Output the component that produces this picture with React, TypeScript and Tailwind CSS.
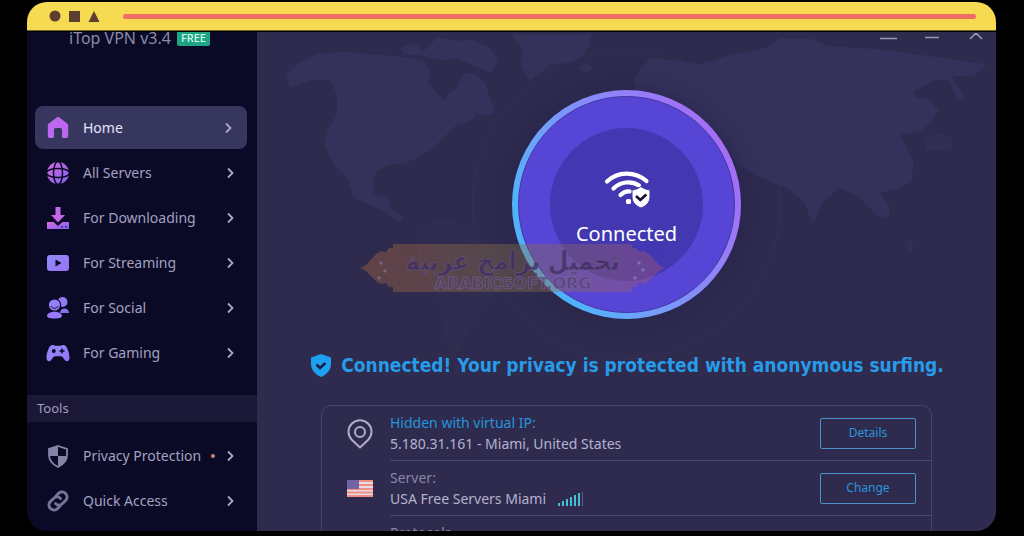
import type { ReactNode } from "react";

interface NavItem {
    label: string;
    icon: ReactNode;
    active?: boolean;
    dot?: boolean;
}

interface StatusRowProps {
    icon?: ReactNode;
    label: string;
    labelClass: string;
    value?: ReactNode;
    action?: string;
}

const SHIELD = "M12 1 22 4.5V11c0 6.200-4.200 10.200-10 13C6.200 21.200 2 17.200 2 11V4.500Z";

const serverItems: NavItem[] = [
    {
        label: "Home",
        active: true,
        icon: (
            <path
                fill="#bd66f0"
                d="M11 1.200a1.600 1.600 0 0 1 2 0l8.200 6.400c.6.500 1 1.200 1 2V20a2 2 0 0 1-2 2h-2.700a1.500 1.500 0 0 1-1.500-1.500V13.500a1.500 1.500 0 0 0-1.500-1.500h-5A1.500 1.500 0 0 0 8 13.500v7A1.500 1.500 0 0 1 6.500 22H3.800a2 2 0 0 1-2-2V9.600c0-.8.400-1.500 1-2Z"
            />
        ),
    },
    {
        label: "All Servers",
        icon: (
            <>
                <circle cx="12" cy="12" r="11" fill="url(#pinkViolet)" />
                <g fill="none" stroke="#0a0926" strokeWidth="1.500">
                    <ellipse cx="12" cy="12" rx="4.500" ry="11.500" />
                    <ellipse cx="12" cy="12" rx="11.500" ry="4.500" />
                </g>
            </>
        ),
    },
    {
        label: "For Downloading",
        icon: (
            <>
                <path fill="#c566ec" d="M9.500 1h5v8H19l-7 7.500L5 9h4.500Z" />
                <path fill="url(#pinkViolet)" d="M1 16h6.500l4.500 4 4.500-4H23v7H1Z" />
                <path fill="#3c2b9c" d="M15 20h2v1.500h-2zM19 20h2v1.500h-2z" />
            </>
        ),
    },
    {
        label: "For Streaming",
        icon: (
            <>
                <rect x="1" y="4" width="22" height="16" rx="3" fill="url(#violet)" />
                <path fill="#0a0926" d="m9.500 8.500 6 3.500-6 3.500Z" />
            </>
        ),
    },
    {
        label: "For Social",
        icon: (
            <>
                <circle cx="16.500" cy="6" r="5" fill="#9279ee" />
                <path fill="#8a70ea" d="M14 17c0-3 2-4.500 4.500-4.500S23 14 23 17Z" />
                <circle cx="8.500" cy="9" r="6.200" fill="url(#violet)" stroke="#0a0926" strokeWidth="1.200" />
                <path fill="none" stroke="#0a0926" d="M5 10c1 3 6 3 7 0" />
                <path fill="#9a78fb" d="M1 20c0-2.500 3.500-4.200 7.500-4.200S16 17.500 16 20c0 1.700-3 2.500-7.500 2.500S1 21.700 1 20Z" />
            </>
        ),
    },
    {
        label: "For Gaming",
        icon: (
            <>
                <path
                    fill="url(#violet)"
                    d="M6.500 4c1.500 0 2.200.8 3.500.8h4c1.300 0 2-.8 3.500-.8C21 4 23.500 12 23.500 17c0 2-1 3.200-2.600 3.200-2.500 0-3.700-5-6-5H9.100c-2.300 0-3.500 5-6 5C1.500 20.200.5 19 .5 17 .5 12 3 4 6.500 4Z"
                />
                <circle cx="7.800" cy="10" r="2" fill="#0a0926" />
                <path stroke="#0a0926" strokeWidth="1.500" d="M13.500 10h5M16 7.500v5" />
            </>
        ),
    },
];

const toolItems: NavItem[] = [
    {
        label: "Privacy Protection",
        dot: true,
        icon: (
            <>
                <path fill="none" stroke="#8783a8" strokeWidth="1.800" d="M12 2 21 5v6c0 5.500-3.500 9.300-9 12-5.500-2.700-9-6.500-9-12V5Z" />
                <path fill="#8783a8" d="M12 2v10H3V5ZM12 12h9c-.5 5-4 8.500-9 11Z" />
            </>
        ),
    },
    {
        label: "Quick Access",
        icon: (
            <g fill="none" stroke="#77739a" strokeWidth="3" strokeLinecap="round">
                <path d="m10 7 3-3a5 5 0 0 1 7 7l-3.500 3.500a5 5 0 0 1-7 0" />
                <path d="m14 17-3 3a5 5 0 0 1-7-7l3.500-3.500a5 5 0 0 1 7 0" />
            </g>
        ),
    },
];

const signalBars = [3, 5, 7, 9, 11, 13];

function Gradients() {
    return (
        <svg className="absolute size-0" aria-hidden="true">
            <defs>
                <linearGradient id="pinkViolet" x1="0" y1="0" x2="1" y2="1">
                    <stop offset="0%" stopColor="#dc6ae0" />
                    <stop offset="100%" stopColor="#7c62ee" />
                </linearGradient>
                <linearGradient id="violet" x1="0" y1="0" x2="1" y2="1">
                    <stop offset="0%" stopColor="#8e8cf8" />
                    <stop offset="100%" stopColor="#9873f4" />
                </linearGradient>
            </defs>
        </svg>
    );
}

function TitleBar() {
    return (
        <header className="flex h-[29px] shrink-0 items-center border-b border-[#6b6330] bg-[#f6db52] pr-5 pl-[22px]">
            <svg viewBox="0 0 50 12" className="h-3 w-[50px]" fill="#5b4030" aria-hidden="true">
                <circle cx="6" cy="6" r="5.500" />
                <rect x="20" y="1" width="11" height="11" />
                <path d="m45 1 5.500 11h-11Z" />
            </svg>
            <div className="ml-6 h-[5px] grow rounded-full bg-[#f06d62]" />
        </header>
    );
}

function NavLink({ item }: { item: NavItem }) {
    return (
        <li>
            <a
                href="#"
                className={
                    item.active
                        ? "flex h-[43px] items-center rounded-lg bg-[#37365f] pr-3 pl-[11px] text-[#e6e4fa]"
                        : "flex h-[43px] items-center pr-[10px] pl-[11px] text-[#a4a1c1]"
                }
            >
                <svg viewBox="0 0 24 24" className="size-6 shrink-0" aria-hidden="true">
                    {item.icon}
                </svg>
                <span className="ml-[13px] grow whitespace-nowrap">{item.label}</span>
                {item.dot && <span className="mr-2 size-1 rounded-full bg-[#d98078]" />}
                <svg viewBox="0 0 14 14" className="size-[14px] shrink-0" fill="none" stroke="#aaa7c6" strokeWidth="1.800" aria-hidden="true">
                    <path d="m5 2.500 4.500 4.500L5 11.500" />
                </svg>
            </a>
        </li>
    );
}

function Sidebar() {
    return (
        <aside className="flex w-[230px] shrink-0 flex-col bg-[#0a0926] text-sm">
            <div className="-mt-2 flex h-7 items-center gap-[6px] pl-[42px]">
                <span className="text-base text-[#8d8aa9]">iTop VPN v3.4</span>
                <span className="rounded-xs bg-[#20a584] px-1 text-[11px] leading-4 font-medium text-[#d5f7ee]">FREE</span>
            </div>
            <nav className="mt-[54px]" aria-label="Servers">
                <ul className="flex flex-col gap-[2px] pr-[10px] pl-2">
                    {serverItems.map((item) => (
                        <NavLink key={item.label} item={item} />
                    ))}
                </ul>
            </nav>
            <h2 className="mt-[21px] h-[27px] bg-[#1a1737] pl-[10px] text-[13px] leading-[27px] text-[#a19ebd]">Tools</h2>
            <nav className="mt-3" aria-label="Tools">
                <ul className="flex flex-col gap-[2px] pr-[10px] pl-2">
                    {toolItems.map((item) => (
                        <NavLink key={item.label} item={item} />
                    ))}
                </ul>
            </nav>
        </aside>
    );
}

function WorldMap() {
    return (
        <svg viewBox="0 33 2217 1000" className="absolute inset-x-0 top-0 w-full" fill="#34325b" aria-hidden="true">
            <path d="M85 165 120 130 180 100 260 92 340 100 420 105 500 120 522 150 510 185 540 215 565 240 575 215 600 200 620 160 650 155 680 180 700 230 715 275 690 285 660 275 640 300 600 310 570 340 530 380 480 410 440 430 400 430 360 450 345 480 350 520 390 530 400 560 440 590 430 605 380 570 290 530 270 470 230 430 200 370 215 320 240 280 240 220 220 180 170 175 100 200Z" />
            <path d="M430 80 470 65 500 90 540 50 600 60 640 55 700 80 725 120 700 155 640 130 600 110 560 120 500 105 440 100Z" />
            <path d="M760 40H1005L985 100 940 125 880 130 840 165 820 180 792 140 795 80Z" />
            <path d="M960 145 985 125 1010 140 995 155Z" />
            <path fill="#302d51" d="M475 640 520 600 570 590 640 630 700 680 760 720 730 820 670 880 620 960 590 1020 560 940 540 820 490 740Z" />
            <path d="M1130 170 1180 110 1270 120 1329 130 1409 105 1529 80 1569 50 1669 55 1709 75 1869 85 1979 100 2189 130 2149 165 2085 165 2128 240 2100 230 2075 175 2029 180 1969 210 1975 228 2015 235 2045 270 2024 300 1990 330 1929 340 1969 420 1965 480 1929 500 1869 515 1899 560 1895 595 1860 585 1809 530 1749 500 1699 540 1669 610 1639 540 1589 500 1509 470 1440 430 1380 330 1250 280 1140 270Z" />
            <path fill="#312f55" d="M2000 350 2050 335 2090 350 2080 385 2010 390ZM1940 670 1970 650 1965 700Z" />
        </svg>
    );
}

function WindowControls() {
    return (
        <svg viewBox="0 0 104 8" className="absolute top-px right-3 h-2 w-[104px]" fill="none" stroke="#9c99bb" strokeWidth="1.500" aria-hidden="true">
            <path d="M0 5.500h17M45 4.500h14M90 6l6-6 6 6" />
        </svg>
    );
}

function ConnectButton() {
    return (
        <div className="relative mt-[58px] size-[229px] shrink-0">
            <div className="absolute -inset-10 rounded-full border border-[#343157]" />
            <button
                type="button"
                className="relative flex size-full items-center justify-center rounded-full bg-linear-60 from-[#50b2fb] from-20% via-[#848cf8] via-55% to-[#a768f4] to-90% p-[6px] shadow-[0_0_24px_#28234d]"
            >
                <span className="flex size-full items-center justify-center rounded-full border border-[#4037a5] bg-[#5746d5]">
                    <span className="flex size-[153px] flex-col items-center rounded-full bg-[#4338b2] pt-[42px] text-xl text-white">
                        <svg viewBox="0 0 46 38" className="h-[38px] w-[46px] shrink-0" fill="none" aria-hidden="true">
                            <g stroke="#fff" strokeWidth="4.200" strokeLinecap="round">
                                <path d="M3 11.500C13.500 1 31 1 42.500 11" />
                                <path d="M9.500 18.500c7-7 18-8 25.500-3" />
                                <path d="M16.500 25c3-3 6.500-4 9.500-3.500" />
                            </g>
                            <rect x="22" y="29" width="5" height="5" rx="1.500" fill="#fff" />
                            <path d="M37 16.500c3 2.200 5.500 3 9 3.500v7c0 5.500-4 9-9 11-5-2-9-5.500-9-11v-7c3.500-.5 6-1.300 9-3.500Z" fill="#fff" stroke="#4338b2" />
                            <path d="m32 26 4.300 4 6-5.500" stroke="#15122f" strokeWidth="2.600" />
                        </svg>
                        <span className="mt-3 leading-7">Connected</span>
                    </span>
                </span>
            </button>
        </div>
    );
}

// Ornamental site banner that floats over the button
function Watermark() {
    return (
        <div className="pointer-events-none absolute top-[212px] left-[103px] h-[49px] w-[306px]">
            <svg viewBox="0 0 306 49" className="absolute inset-0 size-full opacity-40" aria-hidden="true">
                <defs>
                    <linearGradient id="banner">
                        <stop offset="0%" stopColor="#b06440" />
                        <stop offset="50%" stopColor="#87704a" />
                        <stop offset="100%" stopColor="#a65870" />
                    </linearGradient>
                </defs>
                <path
                    fill="url(#banner)"
                    d="M0 24c9-2 11-12 21-17l5 1 3-4h4V0h239v4h4l3 4 5-1c10 5 12 14 21 17-9 3-11 11-21 16l-5-1-3 4h-4v5H33v-5h-4l-3-4-5 1C11 35 9 27 0 24Z"
                />
                <path fill="#d4c4dd" d="m21 17 2 2-2 2-2-2Zm4 8 2 2-2 2-2-2Zm-6 7 2 2-2 2-2-2Zm260-15 2 2-2 2-2-2Zm4 7 2 2-2 2-2-2Zm-8 8 2 2-2 2-2-2Z" />
            </svg>
            <div className="relative flex h-full flex-col items-center">
                <span
                    lang="ar"
                    dir="rtl"
                    className="font-['DejaVu_Sans_Condensed','DejaVu_Sans',sans-serif] text-[26px] leading-[34px] font-bold whitespace-nowrap text-[#3e2e63]/80 [-webkit-text-stroke:1px_#77608a66]"
                >
                    تحميل برامج عربية
                </span>
                <span className="font-['DejaVu_Sans',sans-serif] text-base leading-3 font-bold text-[#4d3b6c]/60 [-webkit-text-stroke:1px_#8a73a077]">
                    ARABICSOFT.ORG
                </span>
            </div>
        </div>
    );
}

function SignalStrength() {
    return (
        <span className="ml-3 inline-flex h-[14px] items-end gap-[2px]">
            {signalBars.map((height) => (
                <span key={height} className="w-[2px] bg-[#43bfd8]" style={{ height }} />
            ))}
            <span className="h-[14px] w-px bg-[#605c87]" />
        </span>
    );
}

function StatusRow({ icon, label, labelClass, value, action }: StatusRowProps) {
    return (
        <div className="flex h-[55px]">
            <div className="flex w-[68px] shrink-0 items-center justify-center pl-2">{icon}</div>
            <div className="flex grow items-center justify-between border-b border-[#48446b] pr-[15px]">
                <div className="text-sm leading-[21px]">
                    <div className={labelClass}>{label}</div>
                    <div className="flex min-h-[21px] items-center text-[#b5b2d0]">{value}</div>
                </div>
                {action && (
                    <button type="button" className="h-[31px] w-24 rounded-xs border border-[#4a92cc] text-xs text-[#2b94da]">
                        {action}
                    </button>
                )}
            </div>
        </div>
    );
}

function PinIcon() {
    return (
        <svg viewBox="0 0 26 30" className="h-[30px] w-[26px]" fill="none" stroke="#b0adca" strokeWidth="2" aria-hidden="true">
            <path d="M13 28.500 4.500 20.500a11.500 11.500 0 1 1 17 0Z" strokeLinejoin="round" />
            <circle cx="13" cy="13" r="5" />
        </svg>
    );
}

function FlagIcon() {
    return (
        <svg viewBox="0 0 26 17" className="h-[17px] w-[26px]" role="img" aria-label="United States">
            <rect width="26" height="17" fill="#e6dbe5" />
            <path stroke="#ee9080" strokeWidth="2" d="M0 1h26M0 5h26M0 9h26M0 12.500h26M0 16h26" />
            <rect width="12" height="9" fill="#7064a5" />
        </svg>
    );
}

export default function App() {
    return (
        <div className="flex h-screen flex-col bg-black pt-[2px] pr-7 pb-[5px] pl-[27px] font-['Noto_Sans',sans-serif]">
            <Gradients />
            <div className="flex min-h-0 grow flex-col overflow-hidden rounded-[20px]">
                <TitleBar />
                <div className="flex min-h-0 grow overflow-hidden border-t border-black">
                    <Sidebar />
                    <main className="relative flex min-w-0 grow flex-col items-center bg-[#2e2b4e] px-16">
                        <WorldMap />
                        <WindowControls />
                        <ConnectButton />
                        <Watermark />
                        <div className="relative mt-8 flex h-7 shrink-0 items-center gap-2">
                            <svg viewBox="0 0 24 25" className="h-[27px] w-6" aria-hidden="true">
                                <path fill="#1e9ff0" d={SHIELD} />
                                <path fill="none" stroke="#15204a" strokeWidth="2.600" d="m7.500 11.500 3.500 3.500 5.500-5" />
                            </svg>
                            <p className="font-['DejaVu_Sans_Condensed','DejaVu_Sans',sans-serif] text-[19px] font-bold whitespace-nowrap text-[#289be8]">
                                Connected! Your privacy is protected with anonymous surfing.
                            </p>
                        </div>
                        <section className="relative mt-[26px] shrink-0 self-stretch rounded-t-[10px] border border-b-0 border-[#48446b]">
                            <StatusRow
                                icon={<PinIcon />}
                                label="Hidden with virtual IP:"
                                labelClass="text-[#2496dc]"
                                value="5.180.31.161 - Miami, United States"
                                action="Details"
                            />
                            <StatusRow
                                icon={<FlagIcon />}
                                label="Server:"
                                labelClass="text-[#8985a9]"
                                value={
                                    <>
                                        USA Free Servers Miami
                                        <SignalStrength />
                                    </>
                                }
                                action="Change"
                            />
                            <StatusRow label="Protocols" labelClass="text-[#8985a9]" />
                        </section>
                    </main>
                </div>
            </div>
        </div>
    );
}
